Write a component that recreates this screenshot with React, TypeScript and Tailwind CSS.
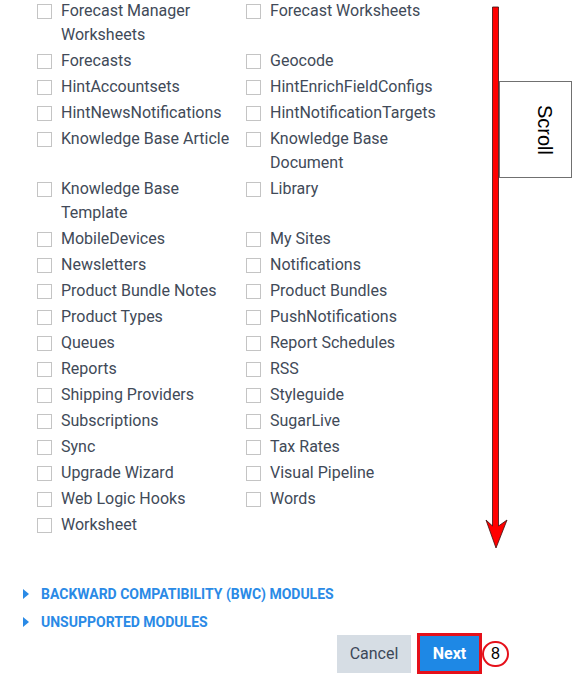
import React from 'react';

// --- Data ---

const leftColumn = [
    'Forecast Manager Worksheets',
    'Forecasts',
    'HintAccountsets',
    'HintNewsNotifications',
    'Knowledge Base Article',
    'Knowledge Base Template',
    'MobileDevices',
    'Newsletters',
    'Product Bundle Notes',
    'Product Types',
    'Queues',
    'Reports',
    'Shipping Providers',
    'Subscriptions',
    'Sync',
    'Upgrade Wizard',
    'Web Logic Hooks',
    'Worksheet',
];

const rightColumn = [
    'Forecast Worksheets',
    'Geocode',
    'HintEnrichFieldConfigs',
    'HintNotificationTargets',
    'Knowledge Base Document',
    'Library',
    'My Sites',
    'Notifications',
    'Product Bundles',
    'PushNotifications',
    'Report Schedules',
    'RSS',
    'Styleguide',
    'SugarLive',
    'Tax Rates',
    'Visual Pipeline',
    'Words',
];

// --- Helper Components ---

const ModuleCheckbox = ({ label }: { label: string }) => (
    <label className="flex items-start gap-[9px]">
        <span className="mt-[5px] h-[15px] w-[15px] shrink-0 border border-[#c4c4c4] bg-white" />
        <span className="w-[174px] text-[16px] leading-[24px] text-[#414a58]">{label}</span>
    </label>
);

const SectionToggle = ({ title }: { title: string }) => (
    <div className="flex items-center gap-[12px] h-[20px]">
        <svg width="6" height="10" viewBox="0 0 6 10" className="shrink-0">
            <path d="M0 0 L6 5 L0 10 Z" fill="#2a8ae6" />
        </svg>
        <span className="text-[14px] font-bold uppercase text-[#2a8ae6]">{title}</span>
    </div>
);

// Red scroll arrow annotation drawn over the list
const ScrollArrow = () => (
    <svg className="absolute left-[484px] top-[6px]" width="26" height="545" viewBox="0 0 26 545">
        <path
            d="M8.5 1 L14.5 1 L14.5 520 L23 514 L12 542 L2 514 L8.5 520 Z"
            fill="#ff0000"
            stroke="#3a1010"
            strokeWidth="0.8"
        />
    </svg>
);

// --- Main Component ---

export default function App() {
    const rows = leftColumn.map((left, i) => ({ left, right: rightColumn[i] }));

    return (
        <div className="relative h-[686px] w-[583px] overflow-hidden bg-white font-['Roboto',sans-serif]">
            <div className="mt-[-1px] pl-[37px]">
                <div className="grid grid-cols-[209px_209px] gap-y-[2px]">
                    {rows.map(({ left, right }) => (
                        <React.Fragment key={left}>
                            <ModuleCheckbox label={left} />
                            {right ? <ModuleCheckbox label={right} /> : <div />}
                        </React.Fragment>
                    ))}
                </div>
            </div>

            <div className="mt-[47px] flex flex-col gap-[8px] pl-[23px]">
                <SectionToggle title="Backward Compatibility (BWC) Modules" />
                <SectionToggle title="Unsupported Modules" />
            </div>

            <div className="mt-[1px] flex items-center justify-end pr-[74px]">
                <button className="h-[38px] w-[74px] bg-[#d6dde4] text-[16px] text-[#3c4858]">Cancel</button>
                <div className="ml-[6px] border-[3px] border-[#e5101a]">
                    <button className="h-[35px] w-[59px] bg-[#1e88e5] text-[16px] font-bold text-white">Next</button>
                </div>
                <div className="flex h-[26px] w-[27px] items-center justify-center rounded-full border-[2px] border-[#e5101a] bg-white font-['Liberation_Sans',sans-serif] text-[16px] text-black">
                    8
                </div>
            </div>

            <ScrollArrow />

            <div className="absolute left-[499px] top-[81px] flex h-[97px] w-[73px] items-center justify-center border-[1.5px] border-[#707070] bg-white">
                <span className="translate-x-[10px] rotate-90 font-['Liberation_Sans',sans-serif] text-[20px] text-black">Scroll</span>
            </div>
        </div>
    );
}
